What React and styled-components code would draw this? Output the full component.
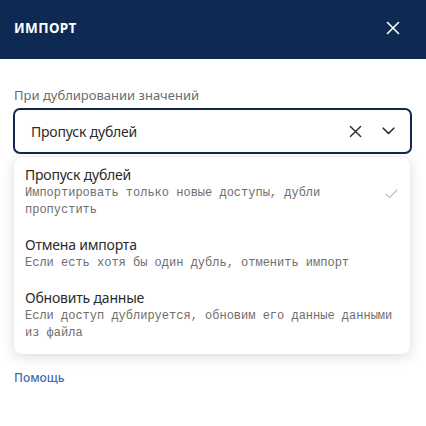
import React from 'react';
import styled, { createGlobalStyle } from 'styled-components';

const GlobalStyle = createGlobalStyle`
  body {
    margin: 0;
    background: #fff;
    font-family: "Noto Sans", "Liberation Sans", sans-serif;
  }
`;

const options = [
  {
    title: 'Пропуск дублей',
    desc: 'Импортировать только новые доступы, дубли пропустить',
    selected: true,
  },
  {
    title: 'Отмена импорта',
    desc: 'Если есть хотя бы один дубль, отменить импорт',
  },
  {
    title: 'Обновить данные',
    desc: 'Если доступ дублируется, обновим его данные данными из файла',
  },
];

const CrossIcon = ({ size = 14, color = '#fff', width = 1.6 }) => (
  <svg width={size} height={size} viewBox="0 0 14 14" fill="none">
    <path d="M1.5 1.5 L12.5 12.5 M12.5 1.5 L1.5 12.5" stroke={color} strokeWidth={width} strokeLinecap="round" />
  </svg>
);

const ChevronIcon = () => (
  <svg width="13" height="8" viewBox="0 0 13 8" fill="none">
    <path d="M1.2 1.2 L6.5 6.5 L11.8 1.2" stroke="#2b2b2b" strokeWidth="1.6" strokeLinecap="round" strokeLinejoin="round" />
  </svg>
);

const CheckIcon = () => (
  <svg width="13" height="10" viewBox="0 0 13 10" fill="none">
    <path d="M1 5.2 L4.6 8.6 L12 1" stroke="#b9b9b9" strokeWidth="1.1" strokeLinecap="round" strokeLinejoin="round" />
  </svg>
);

class App extends React.Component {
  render() {
    return (
      <Page>
        <GlobalStyle />
        <Header>
          <Title>ИМПОРТ</Title>
          <IconButton><CrossIcon size={14} /></IconButton>
        </Header>
        <Body>
          <Label>При дублировании значений</Label>
          <Select>
            <SelectValue>Пропуск дублей</SelectValue>
            <SelectIcon><CrossIcon size={13} color="#2b2b2b" width={1.5} /></SelectIcon>
            <SelectIcon><ChevronIcon /></SelectIcon>
          </Select>
          <Menu>
            {options.map((o) => (
              <Option key={o.title}>
                <OptionTitle>{o.title}</OptionTitle>
                <OptionDesc>{o.desc}</OptionDesc>
                {o.selected && <Check><CheckIcon /></Check>}
              </Option>
            ))}
          </Menu>
          <Help>Помощь</Help>
        </Body>
      </Page>
    );
  }
}

const Page = styled.div`
  width: 426px;
  height: 426px;
  background: #fff;
`;

const Header = styled.div`
  height: 59px;
  background: #0e2a53;
  display: flex;
  align-items: center;
  justify-content: space-between;
  padding: 0 26px 0 14px;
  box-sizing: border-box;
`;

const Title = styled.div`
  color: #fff;
  font-family: "Noto Sans", "Liberation Sans", sans-serif;
  font-weight: 700;
  font-size: 13.5px;
  letter-spacing: 0.4px;
  margin-top: -4px;
`;

const IconButton = styled.div`
  display: flex;
  margin-top: -4px;
`;

const Body = styled.div`
  padding: 27px 14px 0 13px;
`;

const Label = styled.div`
  font-size: 13px;
  color: #6b6b6b;
  line-height: 18px;
  padding-left: 1px;
`;

const Select = styled.div`
  margin-top: 4px;
  height: 46px;
  box-sizing: border-box;
  border: 2px solid #10294d;
  border-radius: 7px;
  display: flex;
  align-items: center;
  padding: 0 15px 0 16px;
  gap: 20px;
`;

const SelectValue = styled.div`
  flex: 1;
  font-size: 14px;
  color: #2b2b2b;
  letter-spacing: -0.2px;
`;

const SelectIcon = styled.div`
  display: flex;
  align-items: center;
`;

const Menu = styled.div`
  margin: 3px 2px 0 1px;
  background: #fff;
  border-radius: 7px;
  box-shadow: 0 3px 14px rgba(0, 0, 0, 0.14), 0 0 1px rgba(0, 0, 0, 0.15);
  padding: 0 0 4px;
`;

const Option = styled.div`
  position: relative;
  padding: 8px 8px 8px 11px;
`;

const OptionTitle = styled.div`
  font-size: 14px;
  line-height: 20px;
  color: #2b2b2b;
  letter-spacing: -0.2px;
`;

const OptionDesc = styled.div`
  font-family: "Liberation Mono", "DejaVu Sans Mono", monospace;
  font-size: 12px;
  line-height: 17px;
  color: #6e6e6e;
  max-width: 370px;
`;

const Check = styled.div`
  position: absolute;
  right: 12px;
  top: 50%;
  margin-top: -3px;
  display: flex;
`;

const Help = styled.div`
  margin-top: 15px;
  padding-left: 1px;
  font-size: 12px;
  font-weight: 500;
  color: #3d6cb3;
`;

export default App;
